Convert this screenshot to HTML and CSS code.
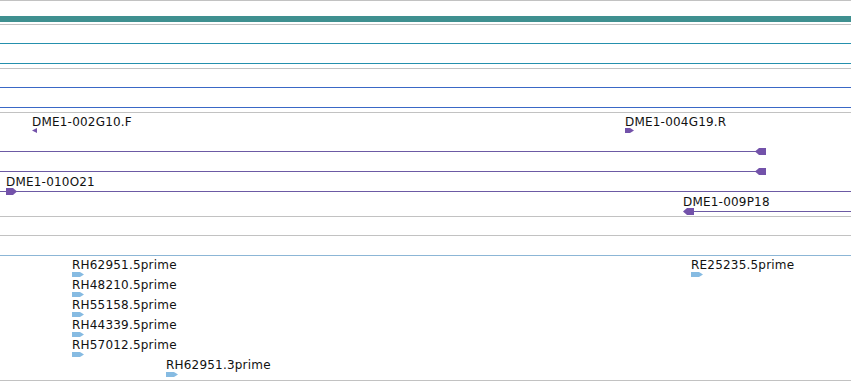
FILE: index.html
```html
<!DOCTYPE html>
<html>
<head>
<meta charset="utf-8">
<link rel="stylesheet" href="styles.css">
</head>
<body>
<div class="browser">
  <div class="track ruler"><div class="ruler-bar"></div></div>
  <div class="track pair"><div class="pair-lines teal"></div></div>
  <div class="track pair"><div class="pair-lines blue"></div></div>
  <div class="track features purple-track">
    <div class="label" style="left:32px;top:3px">DME1-002G10.F</div>
    <svg class="head" style="left:32px;top:15px" width="5" height="5"><polygon points="0,2.5 5,0 5,5"/></svg>
    <div class="label" style="left:625px;top:3px">DME1-004G19.R</div>
    <svg class="head" style="left:625px;top:15px" width="9" height="5"><polygon points="0,0 5,0 9,2.5 5,5 0,5"/></svg>

    <div class="hline purple" style="left:0;top:38px;width:760px"></div>
    <svg class="head" style="left:755px;top:35px" width="11" height="7"><polygon points="0,3.5 4,0 11,0 11,7 4,7"/></svg>

    <div class="hline purple" style="left:0;top:58px;width:760px"></div>
    <svg class="head" style="left:755px;top:55px" width="11" height="7"><polygon points="0,3.5 4,0 11,0 11,7 4,7"/></svg>

    <div class="label" style="left:6px;top:63px">DME1-010O21</div>
    <div class="hline purple" style="left:0;top:78px;right:0"></div>
    <svg class="head" style="left:6px;top:75px" width="11" height="7"><polygon points="0,0 7,0 11,3.5 7,7 0,7"/></svg>

    <div class="label" style="left:683px;top:83px">DME1-009P18</div>
    <div class="hline purple" style="left:686px;top:98px;right:0"></div>
    <svg class="head" style="left:683px;top:95px" width="11" height="7"><polygon points="0,3.5 4,0 11,0 11,7 4,7"/></svg>
  </div>
  <div class="track spacer"></div>
  <div class="track features est-track">
    <div class="hline lightblue" style="left:0;top:19px;right:0"></div>

    <div class="label" style="left:72px;top:23px">RH62951.5prime</div>
    <svg class="head est" style="left:72px;top:36px" width="12" height="5"><polygon points="0,0 8,0 12,2.5 8,5 0,5"/></svg>
    <div class="label" style="left:72px;top:43px">RH48210.5prime</div>
    <svg class="head est" style="left:72px;top:56px" width="12" height="5"><polygon points="0,0 8,0 12,2.5 8,5 0,5"/></svg>
    <div class="label" style="left:72px;top:63px">RH55158.5prime</div>
    <svg class="head est" style="left:72px;top:76px" width="12" height="5"><polygon points="0,0 8,0 12,2.5 8,5 0,5"/></svg>
    <div class="label" style="left:72px;top:83px">RH44339.5prime</div>
    <svg class="head est" style="left:72px;top:96px" width="12" height="5"><polygon points="0,0 8,0 12,2.5 8,5 0,5"/></svg>
    <div class="label" style="left:72px;top:103px">RH57012.5prime</div>
    <svg class="head est" style="left:72px;top:116px" width="12" height="5"><polygon points="0,0 8,0 12,2.5 8,5 0,5"/></svg>
    <div class="label" style="left:166px;top:123px">RH62951.3prime</div>
    <svg class="head est" style="left:166px;top:136px" width="12" height="5"><polygon points="0,0 8,0 12,2.5 8,5 0,5"/></svg>

    <div class="label" style="left:691px;top:23px">RE25235.5prime</div>
    <svg class="head est" style="left:691px;top:36px" width="12" height="5"><polygon points="0,0 8,0 12,2.5 8,5 0,5"/></svg>
  </div>
  <div class="track end"></div>
</div>
</body>
</html>
```

FILE: styles.css
```css
html, body {
  margin: 0;
  padding: 0;
  background: #ffffff;
}
.browser {
  width: 851px;
  font-family: "DejaVu Sans", sans-serif;
  font-size: 12px;
  line-height: 12px;
  letter-spacing: 0.2px;
  color: #111;
  overflow: hidden;
}
.track {
  position: relative;
  border-top: 1px solid #c2c2c2;
}
.ruler {
  height: 23px;
}
.ruler-bar {
  margin-top: 15px;
  height: 6px;
  background: #3f9090;
}
.pair {
  height: 43px;
}
.pair-lines {
  margin-top: 18px;
  height: 19px;
  border-top: 1px solid;
  border-bottom: 1px solid;
}
.pair-lines.teal { border-color: #2590ad; }
.pair-lines.blue { border-color: #3a68c6; }
.purple-track {
  height: 103px;
}
.spacer {
  height: 18px;
}
.est-track {
  height: 144px;
}
.end {
  height: 0;
}
.label {
  position: absolute;
  white-space: nowrap;
}
.hline {
  position: absolute;
  height: 1px;
}
.hline.purple { background: #6c5aa4; }
.hline.lightblue { background: #8cb6d6; }
.head {
  position: absolute;
  display: block;
  fill: #7352aa;
}
.head.est {
  fill: #86bbe2;
}
```
